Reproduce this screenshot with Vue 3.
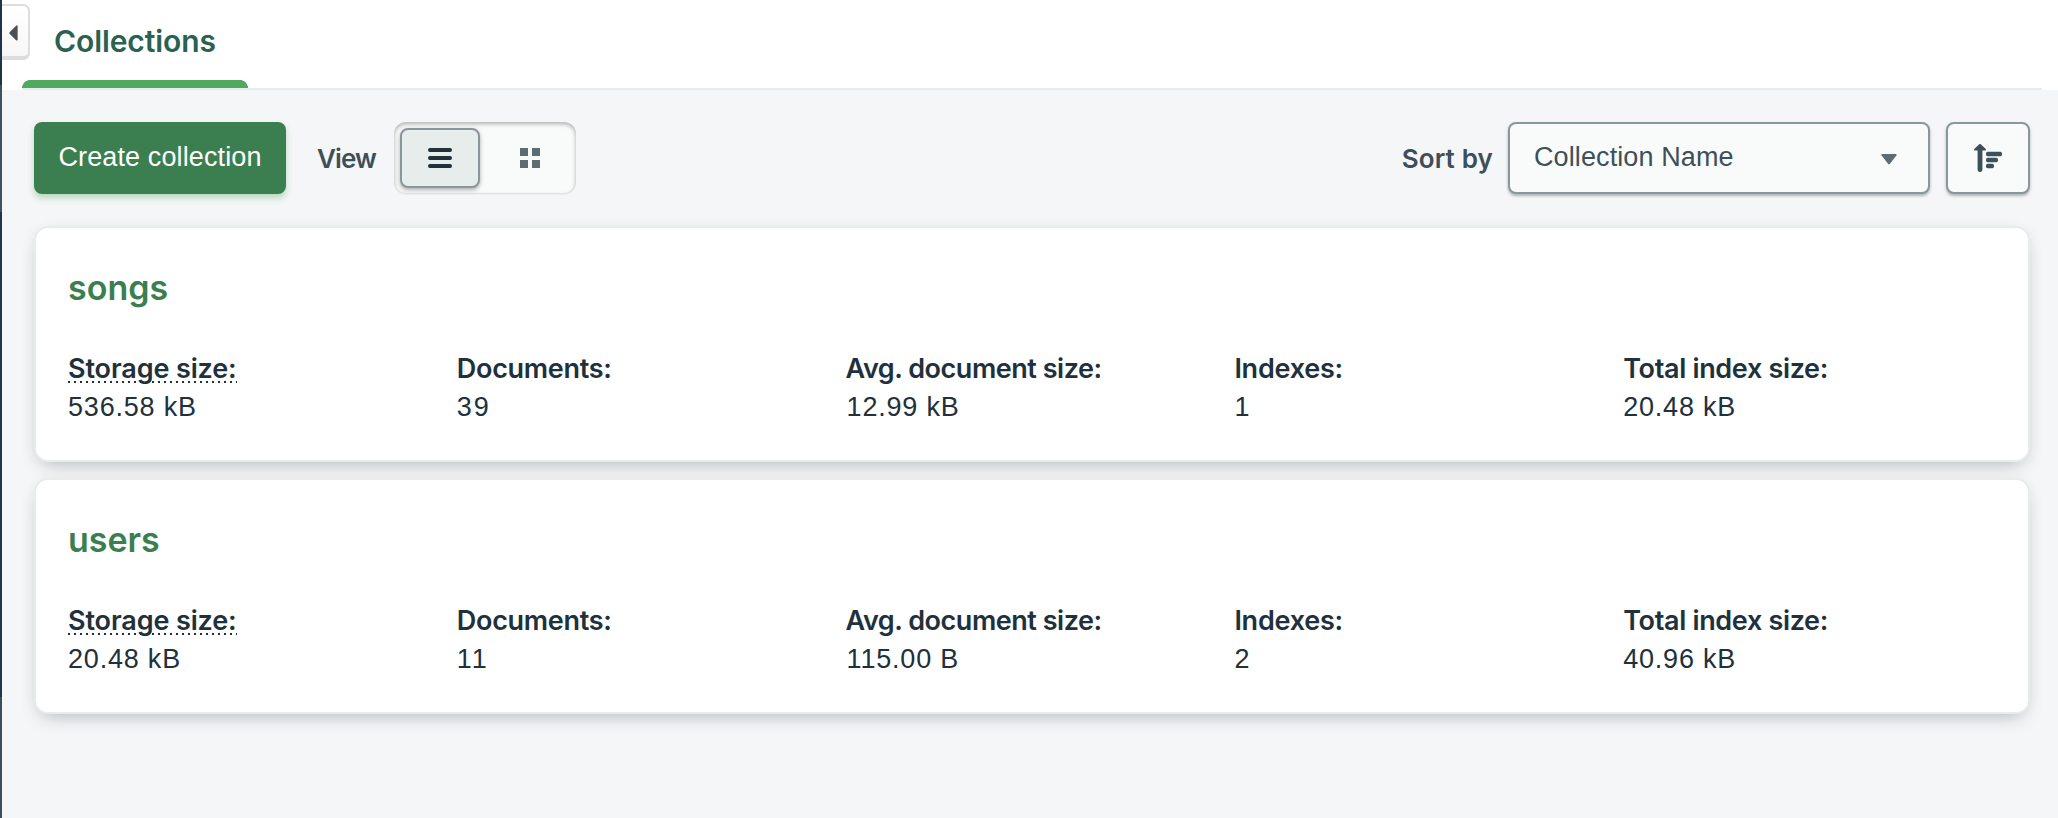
<script setup>
import { ref } from 'vue'

const view = ref('list')

const collections = [
  {
    name: 'songs',
    stats: [
      { key: 'storage', label: 'Storage size:', value: '536.58 kB' },
      { key: 'documents', label: 'Documents:', value: '39' },
      { key: 'average', label: 'Avg. document size:', value: '12.99 kB' },
      { key: 'indexes', label: 'Indexes:', value: '1' },
      { key: 'total', label: 'Total index size:', value: '20.48 kB' },
    ],
  },
  {
    name: 'users',
    stats: [
      { key: 'storage', label: 'Storage size:', value: '20.48 kB' },
      { key: 'documents', label: 'Documents:', value: '11' },
      { key: 'average', label: 'Avg. document size:', value: '115.00 B' },
      { key: 'indexes', label: 'Indexes:', value: '2' },
      { key: 'total', label: 'Total index size:', value: '40.96 kB' },
    ],
  },
]
</script>

<template>
  <div class="window">
    <div class="sidebar-edge"></div>
    <button class="collapse" aria-label="Collapse sidebar">
      <svg width="9" height="16" viewBox="0 0 9 16"><path d="M0.6 7.2 7.4 0.5Q8.6 0 8.6 1.2V14.8Q8.6 16 7.4 15.4L0.6 8.8Q0 8 0.6 7.2Z" fill="#494f53" /></svg>
    </button>

    <div class="content">
      <header class="tabs">
        <div class="tab">Collections</div>
      </header>

      <div class="toolbar">
        <button class="create">Create collection</button>
        <span class="caption view-caption">View</span>
        <div class="segmented">
          <button class="segment" :class="{ selected: view === 'list' }" aria-label="List" @click="view = 'list'">
            <svg width="24" height="20" viewBox="0 0 24 20" fill="#21313c">
              <rect width="24" height="4" rx="2" />
              <rect y="8" width="24" height="4" rx="2" />
              <rect y="16" width="24" height="4" rx="2" />
            </svg>
          </button>
          <button class="segment" :class="{ selected: view === 'grid' }" aria-label="Grid" @click="view = 'grid'">
            <svg width="20" height="20" viewBox="0 0 20 20" fill="#5d6c74">
              <rect width="8" height="8" />
              <rect x="12" width="8" height="8" />
              <rect y="12" width="8" height="8" />
              <rect x="12" y="12" width="8" height="8" />
            </svg>
          </button>
        </div>
        <span class="caption sort-caption">Sort by</span>
        <div class="select">
          <span>Collection Name</span>
          <svg width="16" height="11" viewBox="0 0 16 11"><path d="M1.2 0H14.8Q16.2 0.3 15.4 1.5L8.8 10Q8 10.9 7.2 10L0.6 1.5Q-0.2 0.3 1.2 0Z" fill="#5d6c74" /></svg>
        </div>
        <button class="order" aria-label="Sort direction">
          <svg width="28" height="28" viewBox="0 0 28 28" fill="#3d4f58">
            <path d="M5.2 0.3Q6 -0.2 6.8 0.3L11.8 5Q12.4 6.6 11 6.6H8.4V25.8Q8.4 28 6 28T3.6 25.8V6.6H1Q-0.4 6.6 0.2 5Z" />
            <rect x="12" y="7.8" width="16" height="4.4" rx="1.7" />
            <rect x="12" y="13.8" width="12" height="4.4" rx="1.7" />
            <rect x="12" y="19.8" width="8" height="4.4" rx="1.7" />
          </svg>
        </button>
      </div>

      <main class="list">
        <article v-for="item in collections" :key="item.name" class="card">
          <h2 class="name">{{ item.name }}</h2>
          <div class="stats">
            <div v-for="stat in item.stats" :key="stat.key" class="stat">
              <div class="label" :class="stat.key">{{ stat.label }}</div>
              <div class="value" :class="stat.key">{{ stat.value }}</div>
            </div>
          </div>
        </article>
      </main>
    </div>
  </div>
</template>

<style>
body {
  margin: 0;
  overflow: hidden;
}
</style>

<style scoped>
.window {
  position: relative;
  display: flex;
  width: 100%;
  height: 818px;
  overflow: hidden;
  background: #f5f6f7;
  color: #21313c;
  font-family: 'Liberation Sans', Arial, sans-serif;
  font-size: 27px;
}

.window * {
  box-sizing: border-box;
}

button {
  margin: 0;
  padding: 0;
  font: inherit;
}

svg {
  display: block;
}

.sidebar-edge {
  flex: none;
  width: 2px;
  background: linear-gradient(#21314a 0 85px, #40525d 85px 212px, #20344a 212px 697px, #3e4e59 697px);
}

.collapse {
  position: absolute;
  left: 2px;
  top: 4px;
  width: 28px;
  height: 56px;
  padding: 3px 0 0 7px;
  display: flex;
  align-items: center;
  border: solid #dddddd;
  border-width: 2px 2px 4px 0;
  border-radius: 0 7px 7px 0;
  background: linear-gradient(#ffffff, #f7f7f7);
}

.content {
  flex: 1;
  min-width: 0;
}

.tabs {
  height: 90px;
  padding: 0 16px 0 20px;
  background: linear-gradient(#e8edeb, #e8edeb) 20px 88px / calc(100% - 36px) 2px no-repeat #ffffff;
}

.tab {
  width: 226px;
  height: 88px;
  padding-left: 32px;
  background: radial-gradient(circle at 8px 8px, #4fa95e 7.6px, transparent 8.2px) 0 80px / 8px 8px no-repeat,
    radial-gradient(circle at 0 8px, #4fa95e 7.6px, transparent 8.2px) 218px 80px / 8px 8px no-repeat,
    linear-gradient(#4fa95e, #4fa95e) 8px 80px / 210px 8px no-repeat;
  color: #2a6150;
  font: 600 30px/82px Inter, sans-serif;
  letter-spacing: -0.09px;
}

.toolbar {
  display: flex;
  align-items: center;
  padding: 32px 28px 0 32px;
}

.create {
  width: 252px;
  height: 72px;
  padding-bottom: 2px;
  border: 0;
  border-radius: 8px;
  background: #3b7f51;
  box-shadow: 0 4px 6px rgba(79, 169, 94, 0.38);
  color: #ffffff;
  line-height: 70px;
  letter-spacing: 0.12px;
}

.caption {
  height: 72px;
  color: #3d4f58;
  font: 600 26px/74px Inter, sans-serif;
  white-space: nowrap;
}

.view-caption {
  width: 77px;
  margin-left: 31px;
  letter-spacing: -0.9px;
}

.sort-caption {
  margin-left: auto;
  margin-right: 15px;
  letter-spacing: 0.15px;
}

.segmented {
  display: flex;
  gap: 4px;
  width: 182px;
  height: 72px;
  padding: 6px;
  border-radius: 12px;
  background: #f9fbfa;
  box-shadow: inset 0 2px 4px rgba(0, 0, 0, 0.3), inset 0 -1px 1px #e8edeb, 0 1px 0 #eceeee;
}

.segment {
  display: flex;
  align-items: center;
  justify-content: center;
  flex: 1;
  height: 60px;
  padding-left: 6px;
  border: 2px solid transparent;
  border-radius: 8px;
  background: transparent;
}

.segment.selected {
  flex: 0 0 80px;
  padding-left: 0;
  border-color: #89979b;
  background: #e7edeb;
  box-shadow: 0 2px 4px rgba(0, 0, 0, 0.3);
}

.select,
.order {
  display: flex;
  align-items: center;
  height: 72px;
  border: 2px solid #89979b;
  border-radius: 8px;
  background: #f9fbfa;
  box-shadow: 0 2px 3px rgba(6, 22, 33, 0.3);
}

.select {
  justify-content: space-between;
  width: 422px;
  padding: 0 31px 0 24px;
  color: #3d4f58;
  letter-spacing: 0.1px;
}

.select span {
  padding-bottom: 1px;
}

.select svg {
  margin-top: 3px;
}

.order {
  width: 84px;
  margin-left: 16px;
  padding-left: 26px;
}

.list {
  display: flex;
  flex-direction: column;
  gap: 16px;
  padding: 32px 28px 0 32px;
}

.card {
  height: 236px;
  padding: 40px 16px 0 32px;
  border: 2px solid #e8edeb;
  border-radius: 14px;
  background: #ffffff;
  box-shadow: 0 8px 20px -8px rgba(0, 30, 43, 0.32), 0 0 14px rgba(0, 30, 43, 0.03);
}

.name {
  margin: 0;
  color: #3b7f51;
  font: 600 34px/40px Inter, sans-serif;
}

.stats {
  display: grid;
  grid-template-columns: repeat(5, 1fr);
  margin-top: 42px;
}

.label {
  width: fit-content;
  height: 38px;
  font: 600 27px/38px Inter, sans-serif;
  white-space: nowrap;
}

.label.storage {
  background: repeating-linear-gradient(90deg, #21313c 0 2px, transparent 2px 6px) 0 31px / 100% 2px no-repeat;
  letter-spacing: -0.12px;
}

.label.documents {
  letter-spacing: -0.3px;
}

.label.average {
  letter-spacing: -0.46px;
}

.label.indexes {
  letter-spacing: -0.25px;
}

.label.total {
  letter-spacing: -0.33px;
}

.value {
  height: 38px;
  line-height: 38px;
  letter-spacing: 0.8px;
}

.value.documents {
  letter-spacing: 2px;
}

.value.average {
  padding-left: 1px;
}
</style>
